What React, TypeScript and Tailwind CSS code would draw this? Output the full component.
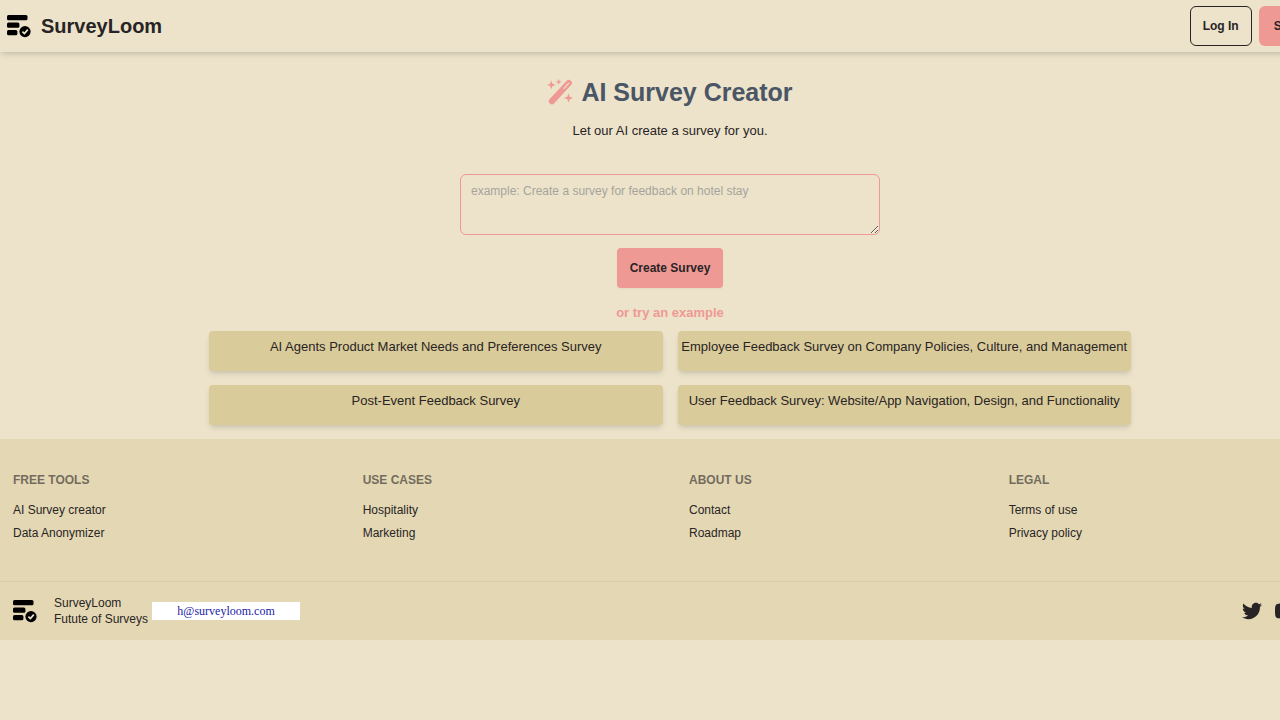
import { useState } from "react";

const examples = [
  "AI Agents Product Market Needs and Preferences Survey",
  "Employee Feedback Survey on Company Policies, Culture, and Management",
  "Post-Event Feedback Survey",
  "User Feedback Survey: Website/App Navigation, Design, and Functionality",
];

const footerColumns = [
  { title: "FREE TOOLS", links: ["AI Survey creator", "Data Anonymizer"] },
  { title: "USE CASES", links: ["Hospitality", "Marketing"] },
  { title: "ABOUT US", links: ["Contact", "Roadmap"] },
  { title: "LEGAL", links: ["Terms of use", "Privacy policy"] },
];

const socials = [
  {
    name: "Twitter",
    path: "M24 4.557c-.883.392-1.832.656-2.828.775 1.017-.609 1.798-1.574 2.165-2.724-.951.564-2.005.974-3.127 1.195-.897-.957-2.178-1.555-3.594-1.555-3.179 0-5.515 2.966-4.797 6.045-4.091-.205-7.719-2.165-10.148-5.144-1.29 2.213-.669 5.108 1.523 6.574-.806-.026-1.566-.247-2.229-.616-.054 2.281 1.581 4.415 3.949 4.89-.693.188-1.452.232-2.224.084.626 1.956 2.444 3.379 4.6 3.419-2.07 1.623-4.678 2.348-7.29 2.04 2.179 1.397 4.768 2.212 7.548 2.212 9.142 0 14.307-7.721 13.995-14.646.962-.695 1.797-1.562 2.457-2.549z",
  },
  {
    name: "YouTube",
    path: "M19.615 3.184c-3.604-.246-11.631-.245-15.23 0-3.897.266-4.356 2.62-4.385 8.816.029 6.185.484 8.549 4.385 8.816 3.6.245 11.626.246 15.23 0 3.897-.266 4.356-2.62 4.385-8.816-.029-6.185-.484-8.549-4.385-8.816zm-10.615 12.816v-8l8 3.993-8 4.007z",
  },
  {
    name: "Facebook",
    path: "M9 8h-3v4h3v12h5v-12h3.642l.358-4h-4v-1.667c0-.955.192-1.333 1.115-1.333h2.885v-5h-3.808c-3.596 0-5.192 1.583-5.192 4.615v3.385z",
  },
];

function Logo() {
  return (
    <svg viewBox="0 0 24 24" className="size-6 shrink-0" aria-hidden="true">
      <rect x="0" y="1" width="20.5" height="5.2" rx="1.5" />
      <rect x="0" y="8.5" width="12.4" height="5.2" rx="1.5" />
      <rect x="0" y="16" width="10.4" height="5.2" rx="1.5" />
      <circle cx="18" cy="17.6" r="5.6" />
      <path
        d="M15.4 17.6l2 2 3.4-4"
        fill="none"
        stroke="#ece3ca"
        strokeWidth="1.7"
      />
    </svg>
  );
}

function Wand() {
  return (
    <svg viewBox="0 0 26 26" className="size-[26px] fill-[#ef9995]" aria-hidden="true">
      <path
        d="M5 22.2L21.8 4"
        stroke="#ef9995"
        strokeWidth="6.2"
        strokeLinecap="round"
      />
      <path
        d="M17 9.4L21.8 4.2"
        stroke="#ece3ca"
        strokeWidth="1.2"
        strokeLinecap="round"
      />
      <path d="M4.3 1.6l1.2 3.1 3.2 1.2-3.2 1.2-1.2 3.2-1.2-3.2L0 5.900l3.100-1.200z" />
      <path d="M11.700 0l.8 2.100 2.100.8-2.100.8-.8 2.100-.8-2.100-2.100-.8 2.100-.8z" />
      <path d="M21.500 14.600l1.300 3.200 3.200 1.200-3.200 1.200-1.300 3.300-1.200-3.300-3.300-1.200 3.300-1.200z" />
    </svg>
  );
}

export default function App() {
  const [prompt, setPrompt] = useState<string>("");

  return (
    <div className="min-h-screen overflow-hidden bg-[#ece3ca] font-['Liberation_Sans',Arial,sans-serif] text-[#282425]">
      {/* the page runs a little wider than the window */}
      <div className="w-[calc(100%+60px)]">
        <header className="flex items-center justify-between py-1.5 pl-[7px] pr-1.5 shadow-md">
          <a href="#" className="flex items-center gap-2.5 text-xl font-bold">
            <Logo />
            SurveyLoom
          </a>
          <div className="flex gap-[7px] text-xs font-bold">
            <button className="h-10 rounded-md border border-[#282425] px-3 cursor-pointer">
              Log In
            </button>
            <button className="h-10 rounded-md bg-[#ef9995] px-[15px] cursor-pointer">
              Sign Up
            </button>
          </div>
        </header>

        <main className="flex flex-col items-center pt-6 pb-3.5">
          <h1 className="flex items-center gap-2 text-[25px] leading-8 font-bold text-gray-600">
            <Wand />
            AI Survey Creator
          </h1>
          <p className="mt-[13px] text-[13px] leading-5">
            Let our AI create a survey for you.
          </p>
          <textarea
            aria-label="Survey description"
            className="mt-[33px] h-[61px] w-[420px] rounded-md border border-[#ef9995] px-2.5 py-2 text-xs leading-4 placeholder:text-[#a6a39d]"
            placeholder="example: Create a survey for feedback on hotel stay"
            value={prompt}
            onChange={(e) => setPrompt(e.target.value)}
          />
          <button className="mt-[13px] h-10 rounded-sm bg-[#ef9995] px-[13px] text-xs font-bold shadow-xs cursor-pointer">
            Create Survey
          </button>
          <p className="mt-[15px] text-[13px] leading-5 font-bold text-[#ef9995]">
            or try an example
          </p>
          <div className="mt-2 grid w-full max-w-[922px] grid-cols-2 gap-x-[15px] gap-y-3.5">
            {examples.map((example) => (
              <button
                key={example}
                className="flex h-10 justify-center rounded-sm bg-[#dacb9a] px-0.5 pt-1.5 text-[13px] leading-5 whitespace-nowrap shadow-md cursor-pointer"
                onClick={() => setPrompt(example)}
              >
                {example}
              </button>
            ))}
          </div>
        </main>

        <footer className="bg-[#e4d8b4] text-xs">
          <div className="grid grid-flow-col gap-8 pl-[13px] pr-[33px] pt-[33px] pb-[39px] leading-[17px]">
            {footerColumns.map((column) => (
              <nav key={column.title} className="flex flex-col items-start gap-1.5">
                <h2 className="mb-[7px] font-bold opacity-60">{column.title}</h2>
                {column.links.map((link) => (
                  <a key={link} href="#" className="hover:underline">
                    {link}
                  </a>
                ))}
              </nav>
            ))}
          </div>
          <div className="flex items-center justify-between border-t border-[#dbcda3] py-[13px] pl-[13px] pr-3">
            <div className="flex items-center">
              <Logo />
              <p className="ml-[17px] leading-4">
                SurveyLoom
                <br />
                Futute of Surveys
              </p>
              <a
                href="mailto:h@surveyloom.com"
                className="ml-1 w-[148px] bg-white text-center font-['Liberation_Serif',serif] leading-[18px] text-[#1a1aa6]"
              >
                h@surveyloom.com
              </a>
            </div>
            <div className="flex gap-[13px]">
              {socials.map((social) => (
                <a key={social.name} href="#" aria-label={social.name}>
                  <svg viewBox="0 0 24 24" className="size-5 fill-current">
                    <path d={social.path} />
                  </svg>
                </a>
              ))}
            </div>
          </div>
        </footer>
      </div>
    </div>
  );
}
